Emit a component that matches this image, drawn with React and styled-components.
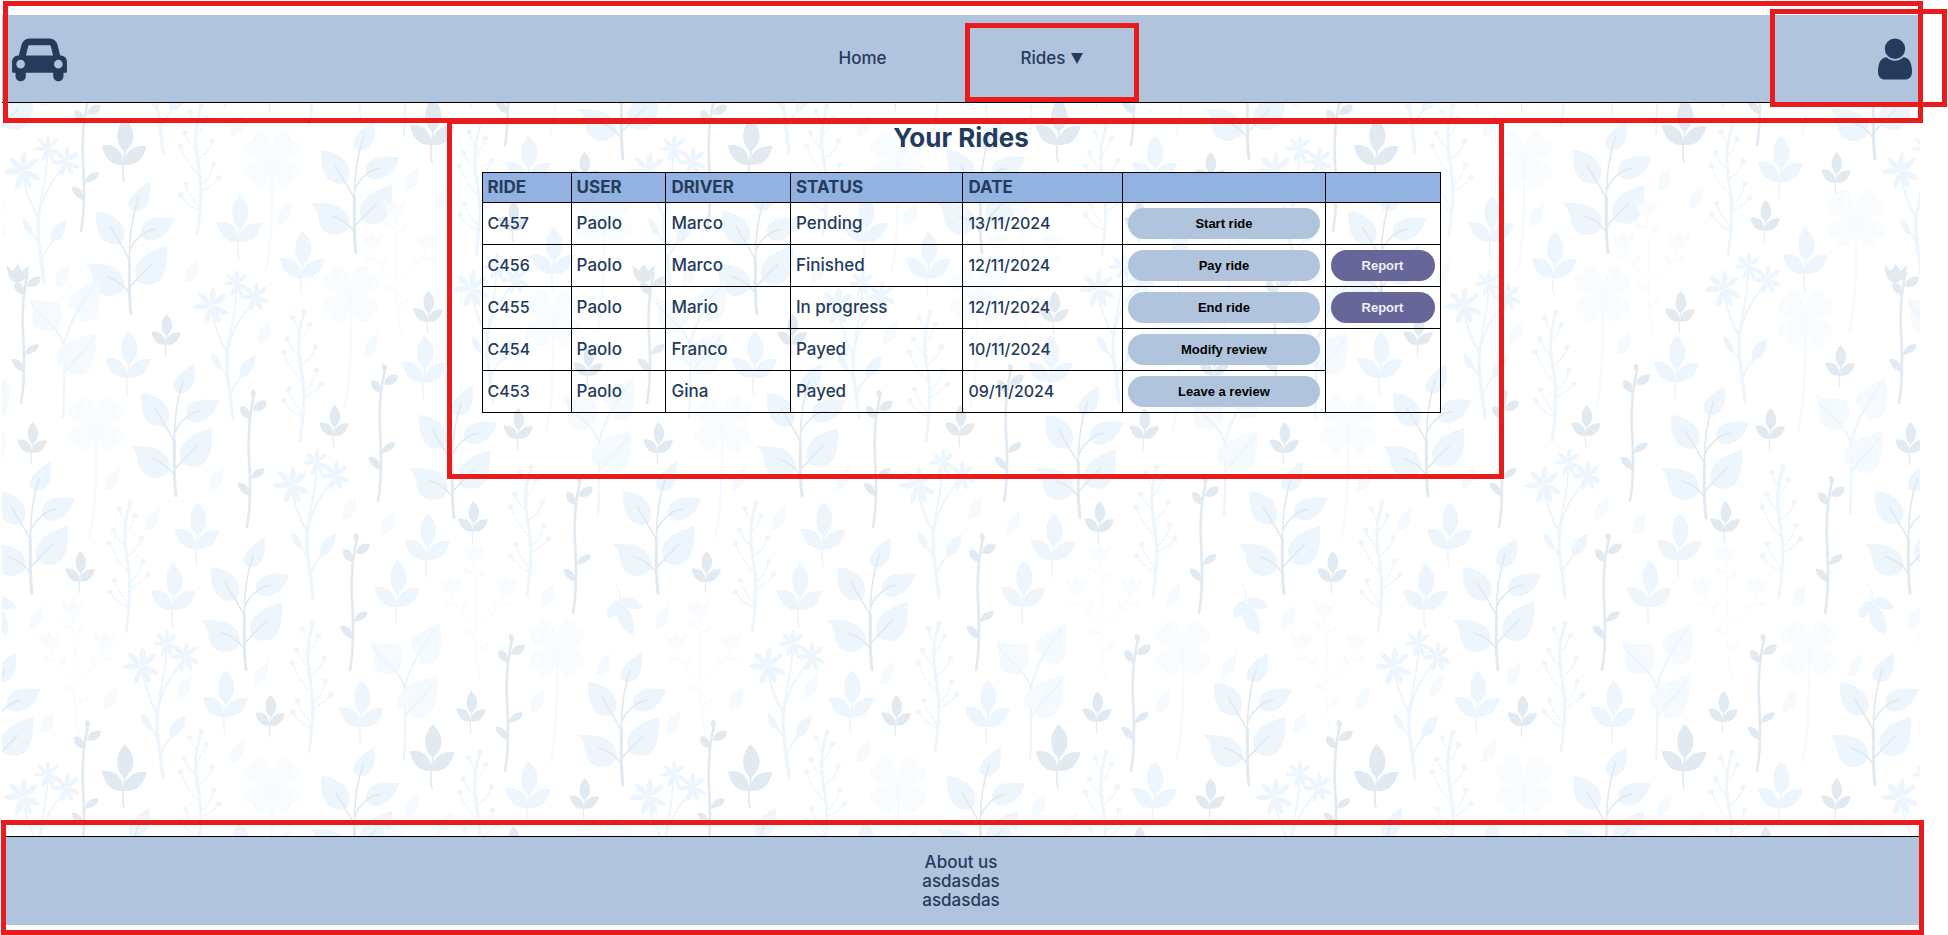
import React from "react";
import styled, { createGlobalStyle, css } from "styled-components";

const colors = {
  navy: "#253b5b",
  steel: "#b0c4de",
  head: "#92b2e1",
  violet: "#666699",
  marker: "#e81c1c",
  leaf: "#edf6fd",
  slate: "#e1eaf1",
  mist: "#f5fafe",
  haze: "#f9fcff",
};

const GlobalStyle = createGlobalStyle`
  *, *::before, *::after { box-sizing: border-box; }
  body {
    margin: 0;
    background: #fff;
    color: ${colors.navy};
    font-family: Inter, "Open Sans", sans-serif;
    font-size: 17px;
    font-weight: 500;
    line-height: 19px;
  }
`;

/* ---------- page frame ---------- */

const Page = styled.div`
  min-height: 100vh;
  padding: 15px 28px 10px 2px;
  display: flex;
  overflow: hidden;
`;

const Sheet = styled.div`
  position: relative;
  flex: 1;
  display: flex;
  flex-direction: column;
  isolation: isolate;
`;

const Wallpaper = styled.svg`
  position: absolute;
  inset: 0;
  width: 100%;
  height: 100%;
  z-index: -1;
`;

const Marker = styled.span`
  position: absolute;
  inset: ${(p) => p.$inset};
  border: 5px solid ${colors.marker};
  pointer-events: none;
`;

/* ---------- header ---------- */

const Header = styled.header`
  position: relative;
  height: 88px;
  display: grid;
  grid-template-columns: 1fr auto 1fr;
  background: ${colors.steel};
  border-bottom: 1px solid #000;
`;

const LogoLink = styled.a`
  display: flex;
  align-items: center;
  justify-self: start;
  padding-left: 10px;
  color: ${colors.navy};
`;

const Nav = styled.nav`
  display: flex;
  gap: 22px;
`;

const navItem = css`
  position: relative;
  display: flex;
  align-items: center;
  padding: 0 56px;
  border: 0;
  background: none;
  color: ${colors.navy};
  font: inherit;
  text-decoration: none;
  cursor: pointer;
`;

const NavLink = styled.a`
  ${navItem}
`;

const NavButton = styled.button`
  ${navItem}
  gap: 6px;
`;

const ProfileLink = styled.a`
  position: relative;
  display: flex;
  align-items: center;
  justify-content: flex-end;
  justify-self: end;
  width: 150px;
  padding-right: 8px;
  color: ${colors.navy};
`;

/* ---------- rides ---------- */

const Main = styled.main`
  flex: 1;
  display: flex;
  flex-direction: column;
  align-items: center;
  padding: 20px 0;
`;

const Rides = styled.section`
  position: relative;
  width: 50%;
`;

const Title = styled.h1`
  margin: 0 0 20px;
  font-size: 26px;
  line-height: 29px;
  font-weight: 700;
  text-align: center;
`;

const Table = styled.table`
  width: 100%;
  border-collapse: collapse;
  table-layout: fixed;
`;

const Col = styled.col`
  width: ${(p) => p.$width};
`;

const HeadCell = styled.th`
  padding: 5px;
  border: 1px solid #000;
  background: ${colors.head};
  font-weight: 700;
  text-align: left;
`;

const Cell = styled.td`
  height: 42px;
  padding: 5px;
  border: 1px solid #000;
  font-size: ${(p) => (p.$numeric ? "16px" : "17px")};
`;

const Pill = styled.button`
  display: block;
  width: 100%;
  height: 31px;
  padding: 0;
  border: 0;
  border-radius: 16px;
  background: ${(p) => (p.$report ? colors.violet : colors.steel)};
  color: ${(p) => (p.$report ? "#f0f0fa" : "#000")};
  font: 700 13px/15px "Liberation Sans", Arial, sans-serif;
  cursor: pointer;
`;

const Footer = styled.footer`
  position: relative;
  padding: 16px 0 15px;
  background: ${colors.steel};
  border-top: 1px solid #000;
  text-align: center;
`;

const FooterLine = styled.p`
  margin: 0;
`;

/* ---------- icons ---------- */

const CarIcon = () => (
  <svg width="55" height="48" viewBox="0 0 2048 1792" fill="currentColor" aria-hidden="true">
    <path d="M480 1088q0-66-47-113t-113-47-113 47-47 113 47 113 113 47 113-47 47-113zm36-320h1016l-89-357q-2-8-14-17.5t-21-9.5h-768q-9 0-21 9.5t-14 17.5zm1372 320q0-66-47-113t-113-47-113 47-47 113 47 113 113 47 113-47 47-113zm160-96v384q0 14-9 23t-23 9h-96v128q0 80-56 136t-136 56-136-56-56-136v-128h-1024v128q0 80-56 136t-136 56-136-56-56-136v-128h-96q-14 0-23-9t-9-23v-384q0-93 65.5-158.5t158.5-65.5h28l105-419q23-94 104-157.5t179-63.5h768q98 0 179 63.5t104 157.5l105 419h28q93 0 158.5 65.5t65.5 158.5z" />
  </svg>
);

const UserIcon = () => (
  <svg width="34" height="48" viewBox="256 0 1280 1792" fill="currentColor" aria-hidden="true">
    <path d="M1536 1399q0 109-62.5 187t-150.5 78h-854q-88 0-150.5-78t-62.5-187q0-85 8.5-160.5t31.5-152 58.5-131 94-89 134.5-34.5q131 128 313 128t313-128q76 0 134.5 34.5t94 89 58.5 131 31.5 152 8.5 160.5zm-256-887q0 159-112.5 271.5t-271.5 112.5-271.5-112.5-112.5-271.5 112.5-271.5 271.5-112.5 271.5 112.5 112.5 271.5z" />
  </svg>
);

const ArrowIcon = () => (
  <svg width="12" height="11" viewBox="0 0 12 11" fill="currentColor" aria-hidden="true">
    <path d="M0 0h12L6 11z" />
  </svg>
);

/* ---------- botanical wallpaper: plants are drawn from the foot of their stem ---------- */

const TILE = 626;

const PLANTS = {
  branch: [[246, 671], [32, 595], [176, 497], [454, 519], [623, 786], [131, 315], [356, 254]],
  sprout: [[197, 566], [173, 627], [225, 734], [427, 577], [397, 624], [361, 744], [528, 825], [239, 259], [302, 295], [128, 395], [424, 399], [553, 291]],
  sproutDark: [[124, 808], [432, 788]],
  sproutSmall: [[32, 464], [80, 593], [270, 737], [473, 543], [471, 733], [584, 820], [166, 356], [428, 333], [334, 447], [518, 450], [513, 242], [588, 387]],
  berries: [[126, 633], [309, 753], [197, 862], [527, 597], [476, 882], [300, 442]],
  stars: [[163, 780], [313, 599], [44, 285], [233, 420], [493, 403]],
  twig: [[350, 670], [573, 613], [505, 771], [378, 501], [247, 527], [81, 857]],
  tulipTwig: [[21, 403]],
  clover: [[553, 761], [268, 898], [347, 407], [92, 537], [549, 431], [600, 331]],
  tulips: [[481, 682], [80, 737], [402, 337]],
  pair: [[404, 760], [63, 417], [598, 515]],
  leaflet: [[119, 463], [159, 503], [223, 462], [43, 601], [117, 682], [191, 670], [54, 706], [268, 657], [244, 735], [356, 492], [394, 507], [554, 579], [610, 649], [544, 685], [419, 789], [451, 807], [291, 198], [198, 256], [69, 259], [271, 316], [378, 328]],
  drop: [[616, 585]],
};

const Star = ({ x, y, r }) => (
  <g transform={`translate(${x} ${y}) scale(${r / 60})`}>
    {[5, 50, 115, 155, 200, 268, 315].map((a) => (
      <path key={a} d="M0 0C-12-20-13-48 0-60C13-48 12-20 0 0" transform={`rotate(${a})`} />
    ))}
  </g>
);

const sproutShape = (
  <>
    <path d="M2-191C-30-160-25-110 2-90C35-115 40-155 2-191M-67-110C-25-117-2-92-2-52C-35-46-58-70-67-110M68-107C28-112 0-90 0-52C38-46 58-70 68-107" />
    <path d="M0 0C-10-35 0-60 4-98" fill="none" strokeWidth="5" strokeLinecap="round" />
  </>
);

const twigShape = (
  <>
    <path d="M8-325C-22-328-24-355-18-362C2-364 12-345 8-325M18-350C20-372 40-384 59-378C60-355 40-343 18-350M8-92C-20-100-30-125-28-132C-10-137 10-120 8-92M12-145C15-167 35-180 53-175C52-155 32-147 12-145" />
    <path d="M0 0C18-100 5-190 5-240C5-320 12-350 20-390" fill="none" strokeWidth="8" strokeLinecap="round" />
  </>
);

const Tulip = ({ x, y }) => (
  <path d="M0 24C-30 20-30-8-34-28L-14-12L0-32L14-12L34-28C30-8 30 20 0 24" transform={`translate(${x} ${y})`} />
);

const Definitions = () => (
  <>
    <g id="branch" transform="scale(.3333)" fill={colors.leaf}>
      <path d="M55-400C0-368-18-335-2-318C25-298 68-325 55-400M130-290C60-300 20-280 32-235C55-208 110-225 130-290M-104-312C-110-230-75-205-32-212C0-250-32-305-104-312M108-207C30-187-5-145 20-100C75-72 115-105 108-207M-137-152C-90-157-10-150-20-80C-50-40-105-55-112-100C-118-130-120-140-137-152" />
      <g fill="none" stroke={colors.slate} strokeLinecap="round">
        <path d="M0-4C-8-60-4-130-5-170" strokeWidth="9" />
        <path d="M-5-170C-5-250 5-300 22-350M-3-195C12-230 45-255 72-257M-5-165C-20-200-50-240-62-265M-5-82Q20-110 62-152M-3-62C-20-92-50-108-72-115" strokeWidth="5" />
      </g>
    </g>
    <g id="sprout" transform="scale(.3333)" fill={colors.leaf} stroke={colors.leaf} strokeWidth="0">{sproutShape}</g>
    <g id="sproutDark" transform="scale(.3333)" fill={colors.slate} stroke={colors.slate} strokeWidth="0">{sproutShape}</g>
    <g id="sproutSmall" transform="scale(.22)" fill={colors.slate} stroke={colors.slate} strokeWidth="0">{sproutShape}</g>
    <g id="berries" transform="scale(.3333)" fill={colors.leaf} stroke={colors.leaf}>
      <g fill="none" strokeLinecap="round">
        <path d="M0-4C15-100 12-170 5-210C-10-290-5-330 12-388" strokeWidth="9" />
        <path d="M5-76C-15-85-35-100-48-122M8-180C-15-200-40-240-50-270M5-255C-10-265-30-285-37-309M4-230C20-240 40-260 46-285M-2-300C8-310 20-330 28-353M8-150C25-160 42-180 50-215M10-133C30-145 50-150 65-175M5-80C0-110-25-115-34-158M0-330Q-15-350-21-373" strokeWidth="4" />
      </g>
      {[[12, -390], [-21, -373], [28, -353], [-37, -309], [46, -285], [-50, -270], [50, -215], [-34, -158], [65, -175], [-49, -124]].map(([x, y]) => (
        <circle key={`${x}${y}`} cx={x} cy={y} r="8" strokeWidth="0" />
      ))}
    </g>
    <g id="stars" transform="scale(.3333)" fill={colors.leaf}>
      <g fill="none" stroke={colors.leaf} strokeLinecap="round">
        <path d="M0-4C-8-90-25-150-15-220" strokeWidth="10" />
        <path d="M-15-220C-5-300 10-310 10-410M-15-195C-50-260-60-300-63-335M-12-220C0-290 45-330 62-365M-8-70Q0-105 30-135M-12-110Q-20-140-36-155" strokeWidth="6" />
      </g>
      <path d="M-65-200C-65-170-50-152-33-150C-35-180-45-192-65-200M68-195C25-180 15-150 22-128C50-130 65-150 68-195" />
      <Star x={-64} y={-342} r={58} />
      <Star x={10} y={-410} r={42} />
      <Star x={67} y={-370} r={46} />
    </g>
    <g id="twig" transform="scale(.3333)" fill={colors.slate} stroke={colors.slate} strokeWidth="0">
      {twigShape}
      <path d="M18-412C5-408 12-392 20-384C30-395 28-408 18-412" />
    </g>
    <g id="tulipTwig" transform="scale(.3333)" fill={colors.slate} stroke={colors.slate} strokeWidth="0">
      {twigShape}
      <Tulip x={-10} y={-385} />
    </g>
    <g id="clover" transform="scale(.3333)" fill={colors.haze}>
      {[45, 135, 225, 315].map((a) => (
        <path key={a} d="M0 0C-30-25-50-60-35-85C-22-98-8-92 0-84C8-92 22-98 35-85C50-60 30-25 0 0" transform={`translate(12 -339) rotate(${a})`} />
      ))}
      <path d="M-8 0C12-80 14-200 12-339" fill="none" stroke={colors.mist} strokeWidth="8" strokeLinecap="round" />
    </g>
    <g id="tulips" transform="scale(.3333)" fill={colors.haze}>
      <Tulip x={-22} y={-385} />
      <Tulip x={-92} y={-288} />
      <Tulip x={75} y={-288} />
      <path d="M-60-345q25-5 40 22q-30 5-40-22M15-335q-20 0-30 25q30 0 30-25M-115-240q25-8 40 12q-30 8-40-12M100-240q-25-8-40 12q30 8 40-12M-55-160q25-5 40 22q-30 5-40-22M25-120q-25 0-40 30q35-5 40-30M-40-245q-20 5-25 30q25 0 25-30M30-245q20 5 25 30q-25 0-25-30" />
      <path d="M0 0C-25-80-15-200-15-260L-22-370M-12-170C-50-190-80-230-92-275M-12-170C30-190 60-230 75-275" fill="none" stroke={colors.haze} strokeWidth="5" />
    </g>
    <g id="pair" transform="scale(.3333)" fill={colors.mist}>
      <path d="M-102-362C-60-335-8-360-5-330C5-270-20-275-32-255C-75-255-90-270-92-300C-90-320-95-340-102-362M108-412C60-390 15-370 17-335C25-320 50-325 52-288C100-280 118-300 108-412M100-255C30-230-30-220-18-160C0-145 20-165 22-130C75-110 105-150 100-255" />
      <path d="M0 0C5-60 2-120 4-160M2-215C20-290 60-350 95-392M2-215C-10-270-60-290-95-340M4-130C30-170 60-190 92-235" fill="none" stroke={colors.leaf} strokeWidth="7" strokeLinecap="round" />
    </g>
    <g id="leaflet" transform="scale(.3333)" fill={colors.mist}>
      <path d="M0 0Q2 15 0 30C2 60-10 78-40 84C-44 55-35 30-6 20Q0 12 0 0" />
    </g>
    <g id="drop" transform="scale(.3333)" fill={colors.leaf} stroke={colors.leaf} strokeWidth="0">
      <path d="M14 45C-20 50-32 75-26 100C10 95 15 70 14 45M14 45C40 20 75 55 78 68C50 80 25 70 14 45M14 55C-5 90 0 125 50 150C65 100 35 65 14 55" />
      <path d="M0 0Q14 20 14 50" fill="none" strokeWidth="4" />
    </g>
    <g id="garden">
      {Object.entries(PLANTS).map(([kind, spots]) =>
        spots.map(([x, y]) => <use key={`${kind}-${x}-${y}`} href={`#${kind}`} transform={`translate(${x} ${y})`} />)
      )}
    </g>
  </>
);

const Botanical = () => (
  <Wallpaper aria-hidden="true">
    <defs>
      <Definitions />
      <pattern id="tile" x="-2" y="-15" width={TILE} height={TILE} patternUnits="userSpaceOnUse">
        {[-TILE, 0, TILE].map((dx) =>
          [-TILE, 0, TILE].map((dy) => <use key={`${dx}/${dy}`} href="#garden" transform={`translate(${dx} ${dy})`} />)
        )}
      </pattern>
    </defs>
    <rect width="100%" height="100%" fill="url(#tile)" />
  </Wallpaper>
);

/* ---------- data ---------- */

const COLUMNS = [
  { label: "Ride", width: "9.3%" },
  { label: "User", width: "9.9%" },
  { label: "Driver", width: "13%" },
  { label: "Status", width: "18%" },
  { label: "Date", width: "16.7%" },
  { label: "", width: "21.1%" },
  { label: "", width: "12%" },
];

const RIDES = [
  { id: "C457", user: "Paolo", driver: "Marco", status: "Pending", date: "13/11/2024", action: "Start ride", report: false, span: 1 },
  { id: "C456", user: "Paolo", driver: "Marco", status: "Finished", date: "12/11/2024", action: "Pay ride", report: true, span: 1 },
  { id: "C455", user: "Paolo", driver: "Mario", status: "In progress", date: "12/11/2024", action: "End ride", report: true, span: 1 },
  { id: "C454", user: "Paolo", driver: "Franco", status: "Payed", date: "10/11/2024", action: "Modify review", report: false, span: 2 },
  { id: "C453", user: "Paolo", driver: "Gina", status: "Payed", date: "09/11/2024", action: "Leave a review", report: false, span: 0 },
];

export default function App() {
  return (
    <Page>
      <GlobalStyle />
      <Sheet>
        <Botanical />
        <Header>
          <LogoLink href="#" aria-label="Car sharing">
            <CarIcon />
          </LogoLink>
          <Nav>
            <NavLink href="#">Home</NavLink>
            <NavButton type="button" aria-haspopup="menu">
              Rides
              <ArrowIcon />
              <Marker $inset="8px 0 0 0" />
            </NavButton>
          </Nav>
          <ProfileLink href="#" aria-label="Profile">
            <UserIcon />
            <Marker $inset="-6px -27px -5px 0" />
          </ProfileLink>
          <Marker $inset="-14px -3px -21px 1px" />
        </Header>

        <Main>
          <Rides>
            <Title>Your Rides</Title>
            <Table>
              <colgroup>
                {COLUMNS.map((c, i) => (
                  <Col key={i} $width={c.width} />
                ))}
              </colgroup>
              <thead>
                <tr>
                  {COLUMNS.map((c, i) => (
                    <HeadCell key={i} scope="col">{c.label.toUpperCase()}</HeadCell>
                  ))}
                </tr>
              </thead>
              <tbody>
                {RIDES.map((r) => (
                  <tr key={r.id}>
                    <Cell $numeric>{r.id}</Cell>
                    <Cell>{r.user}</Cell>
                    <Cell>{r.driver}</Cell>
                    <Cell>{r.status}</Cell>
                    <Cell $numeric>{r.date}</Cell>
                    <Cell><Pill type="button">{r.action}</Pill></Cell>
                    {r.span > 0 && (
                      <Cell rowSpan={r.span}>
                        {r.report && <Pill type="button" $report>Report</Pill>}
                      </Cell>
                    )}
                  </tr>
                ))}
              </tbody>
            </Table>
            <Marker $inset="-4px -63px -66px -35px" />
          </Rides>
        </Main>

        <Footer>
          <FooterLine>About us</FooterLine>
          <FooterLine>asdasdas</FooterLine>
          <FooterLine>asdasdas</FooterLine>
          <Marker $inset="-17px -4px -10px -1px" />
        </Footer>
      </Sheet>
    </Page>
  );
}
